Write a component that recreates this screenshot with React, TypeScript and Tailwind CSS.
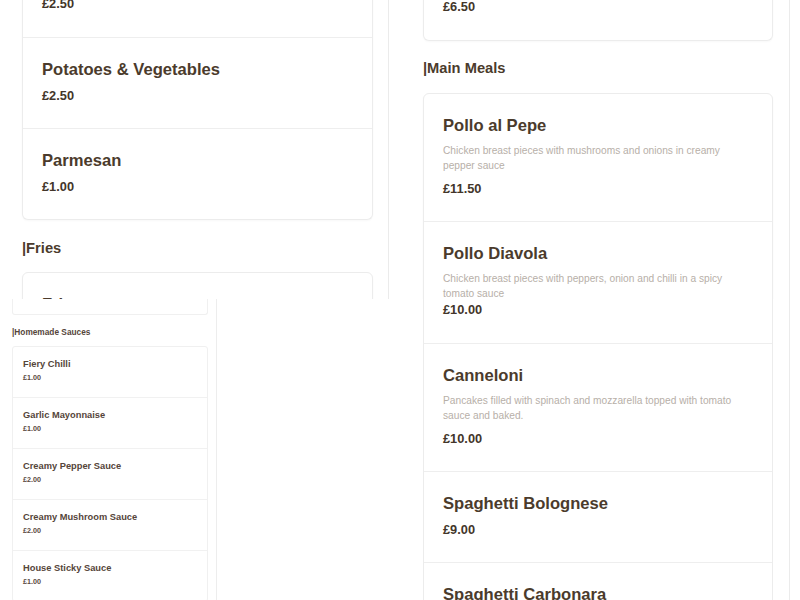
type Item = { title?: string; desc?: string; price?: string };

const pollo: Item[] = [
  {
    title: 'Pollo al Pepe',
    desc: 'Chicken breast pieces with mushrooms and onions in creamy pepper sauce',
    price: '£11.50',
  },
  {
    title: 'Pollo Diavola',
    desc: 'Chicken breast pieces with peppers, onion and chilli in a spicy tomato sauce',
    price: '£10.00',
  },
];

const pasta: Item[] = [
  {
    title: 'Canneloni',
    desc: 'Pancakes filled with spinach and mozzarella topped with tomato sauce and baked.',
    price: '£10.00',
  },
  { title: 'Spaghetti Bolognese', price: '£9.00' },
  { title: 'Spaghetti Carbonara' },
];

const sides: Item[] = [
  { title: 'Potatoes & Vegetables', price: '£2.50' },
  { title: 'Parmesan', price: '£1.00' },
];

const sauces: Item[] = [
  { title: 'Fiery Chilli', price: '£1.00' },
  { title: 'Garlic Mayonnaise', price: '£1.00' },
  { title: 'Creamy Pepper Sauce', price: '£2.00' },
  { title: 'Creamy Mushroom Sauce', price: '£2.00' },
  { title: 'House Sticky Sauce', price: '£1.00' },
];

function BigRow({ item, tail = false }: { item: Item; tail?: boolean }) {
  return (
    <div
      className={
        tail
          ? 'px-[19px] pb-[24px]'
          : 'border-t border-[#eeeeee] px-[19px] pt-[21px] pb-[23px]'
      }
    >
      {item.title && (
        <h3 className="mb-[6px] text-[16.6px] font-bold leading-[22px] text-[#4b3b2c]">
          {item.title}
        </h3>
      )}
      {item.desc && (
        <p className="mt-[2px] mb-[7px] text-[10.2px] leading-[15px] text-[#b7afa8]">
          {item.desc}
        </p>
      )}
      {item.price && (
        <div className="text-[12.8px] font-bold leading-[18px] text-[#43362a]">
          {item.price}
        </div>
      )}
    </div>
  );
}

function SmallRow({ item }: { item: Item }) {
  return (
    <div className="border-t border-[#f1f1f1] px-[10px] pt-[11px] pb-[14px] first:border-t-0">
      <h3 className="mb-[3px] text-[9.3px] font-bold leading-[12px] text-[#55453a]">
        {item.title}
      </h3>
      <div className="text-[7.2px] font-bold leading-[10px] text-[#5a4a3f]">{item.price}</div>
    </div>
  );
}

function BigHeading({ children }: { children: string }) {
  return (
    <h2 className="mt-[17px] mb-[14px] text-[14.7px] font-bold leading-[20px] text-[#4b3b2c]">
      |{children}
    </h2>
  );
}

function BigCard({ children, tail = false }: { children: React.ReactNode; tail?: boolean }) {
  return (
    <div
      className={
        tail
          ? 'rounded-b-md border-x border-b border-[#ececec] bg-white shadow-[0_1px_2px_rgba(0,0,0,0.03)]'
          : 'rounded-md border border-[#ececec] bg-white shadow-[0_1px_2px_rgba(0,0,0,0.03)]'
      }
    >
      {children}
    </div>
  );
}

export default function App() {
  return (
    <div className="flex h-[600px] w-[800px] flex-col overflow-hidden bg-white font-['Liberation_Sans',Arial,sans-serif]">
      {/* upper view */}
      <div className="flex h-[299px] shrink-0 overflow-hidden">
        <div className="w-[389px] shrink-0 overflow-hidden border-r border-[#ebebeb] pl-[22px] pr-[15px]">
          <div className="mt-[-5px]">
            <BigCard tail>
              <BigRow item={{ price: '£2.50' }} tail />
              {sides.map((s) => (
                <BigRow key={s.title} item={s} />
              ))}
            </BigCard>
          </div>
          <div className="pt-px">
            <BigHeading>Fries</BigHeading>
          </div>
          <BigCard>
            <div className="px-[19px] pt-[21px]">
              <h3 className="text-[16.6px] font-bold leading-[22px] text-[#4b3b2c]">Fries</h3>
            </div>
          </BigCard>
        </div>

        <div className="w-[401px] shrink-0 overflow-hidden border-r border-[#ebebeb] pl-[34px] pr-[16px]">
          <div className="mt-[-2px]">
            <BigCard tail>
              <BigRow item={{ price: '£6.50' }} tail />
            </BigCard>
          </div>
          <div className="pb-px">
            <BigHeading>Main Meals</BigHeading>
          </div>
          <BigCard>
            {pollo.map((p, i) => (
              <div key={p.title} className={i === 0 ? '[&>div]:border-t-0' : ''}>
                <BigRow item={p} />
              </div>
            ))}
          </BigCard>
        </div>
      </div>

      {/* lower view */}
      <div className="flex flex-1 overflow-hidden">
        <div className="w-[217px] shrink-0 overflow-hidden border-r border-[#ededed] pl-[12px] pr-[8px]">
          <div className="h-[16px] rounded-b-[3px] border-x border-b border-[#f0f0f0] bg-white" />
          <h2 className="mt-[12px] mb-[8px] text-[8.3px] font-bold leading-[11px] text-[#55453a]">
            |Homemade Sauces
          </h2>
          <div className="rounded-[3px] border border-[#f0f0f0] bg-white">
            {sauces.map((s) => (
              <SmallRow key={s.title} item={s} />
            ))}
          </div>
        </div>

        <div className="w-[172px] shrink-0" />

        <div className="w-[401px] shrink-0 overflow-hidden border-r border-[#ebebeb] pl-[34px] pr-[16px]">
          <div className="rounded-b-md border-x border-b border-[#ececec] bg-white">
            <div className="px-[19px] pt-[2px] pb-[24px]">
              <div className="text-[12.8px] font-bold leading-[18px] text-[#43362a]">£10.00</div>
            </div>
            {pasta.map((p) => (
              <BigRow key={p.title} item={p} />
            ))}
          </div>
        </div>
      </div>
    </div>
  );
}
